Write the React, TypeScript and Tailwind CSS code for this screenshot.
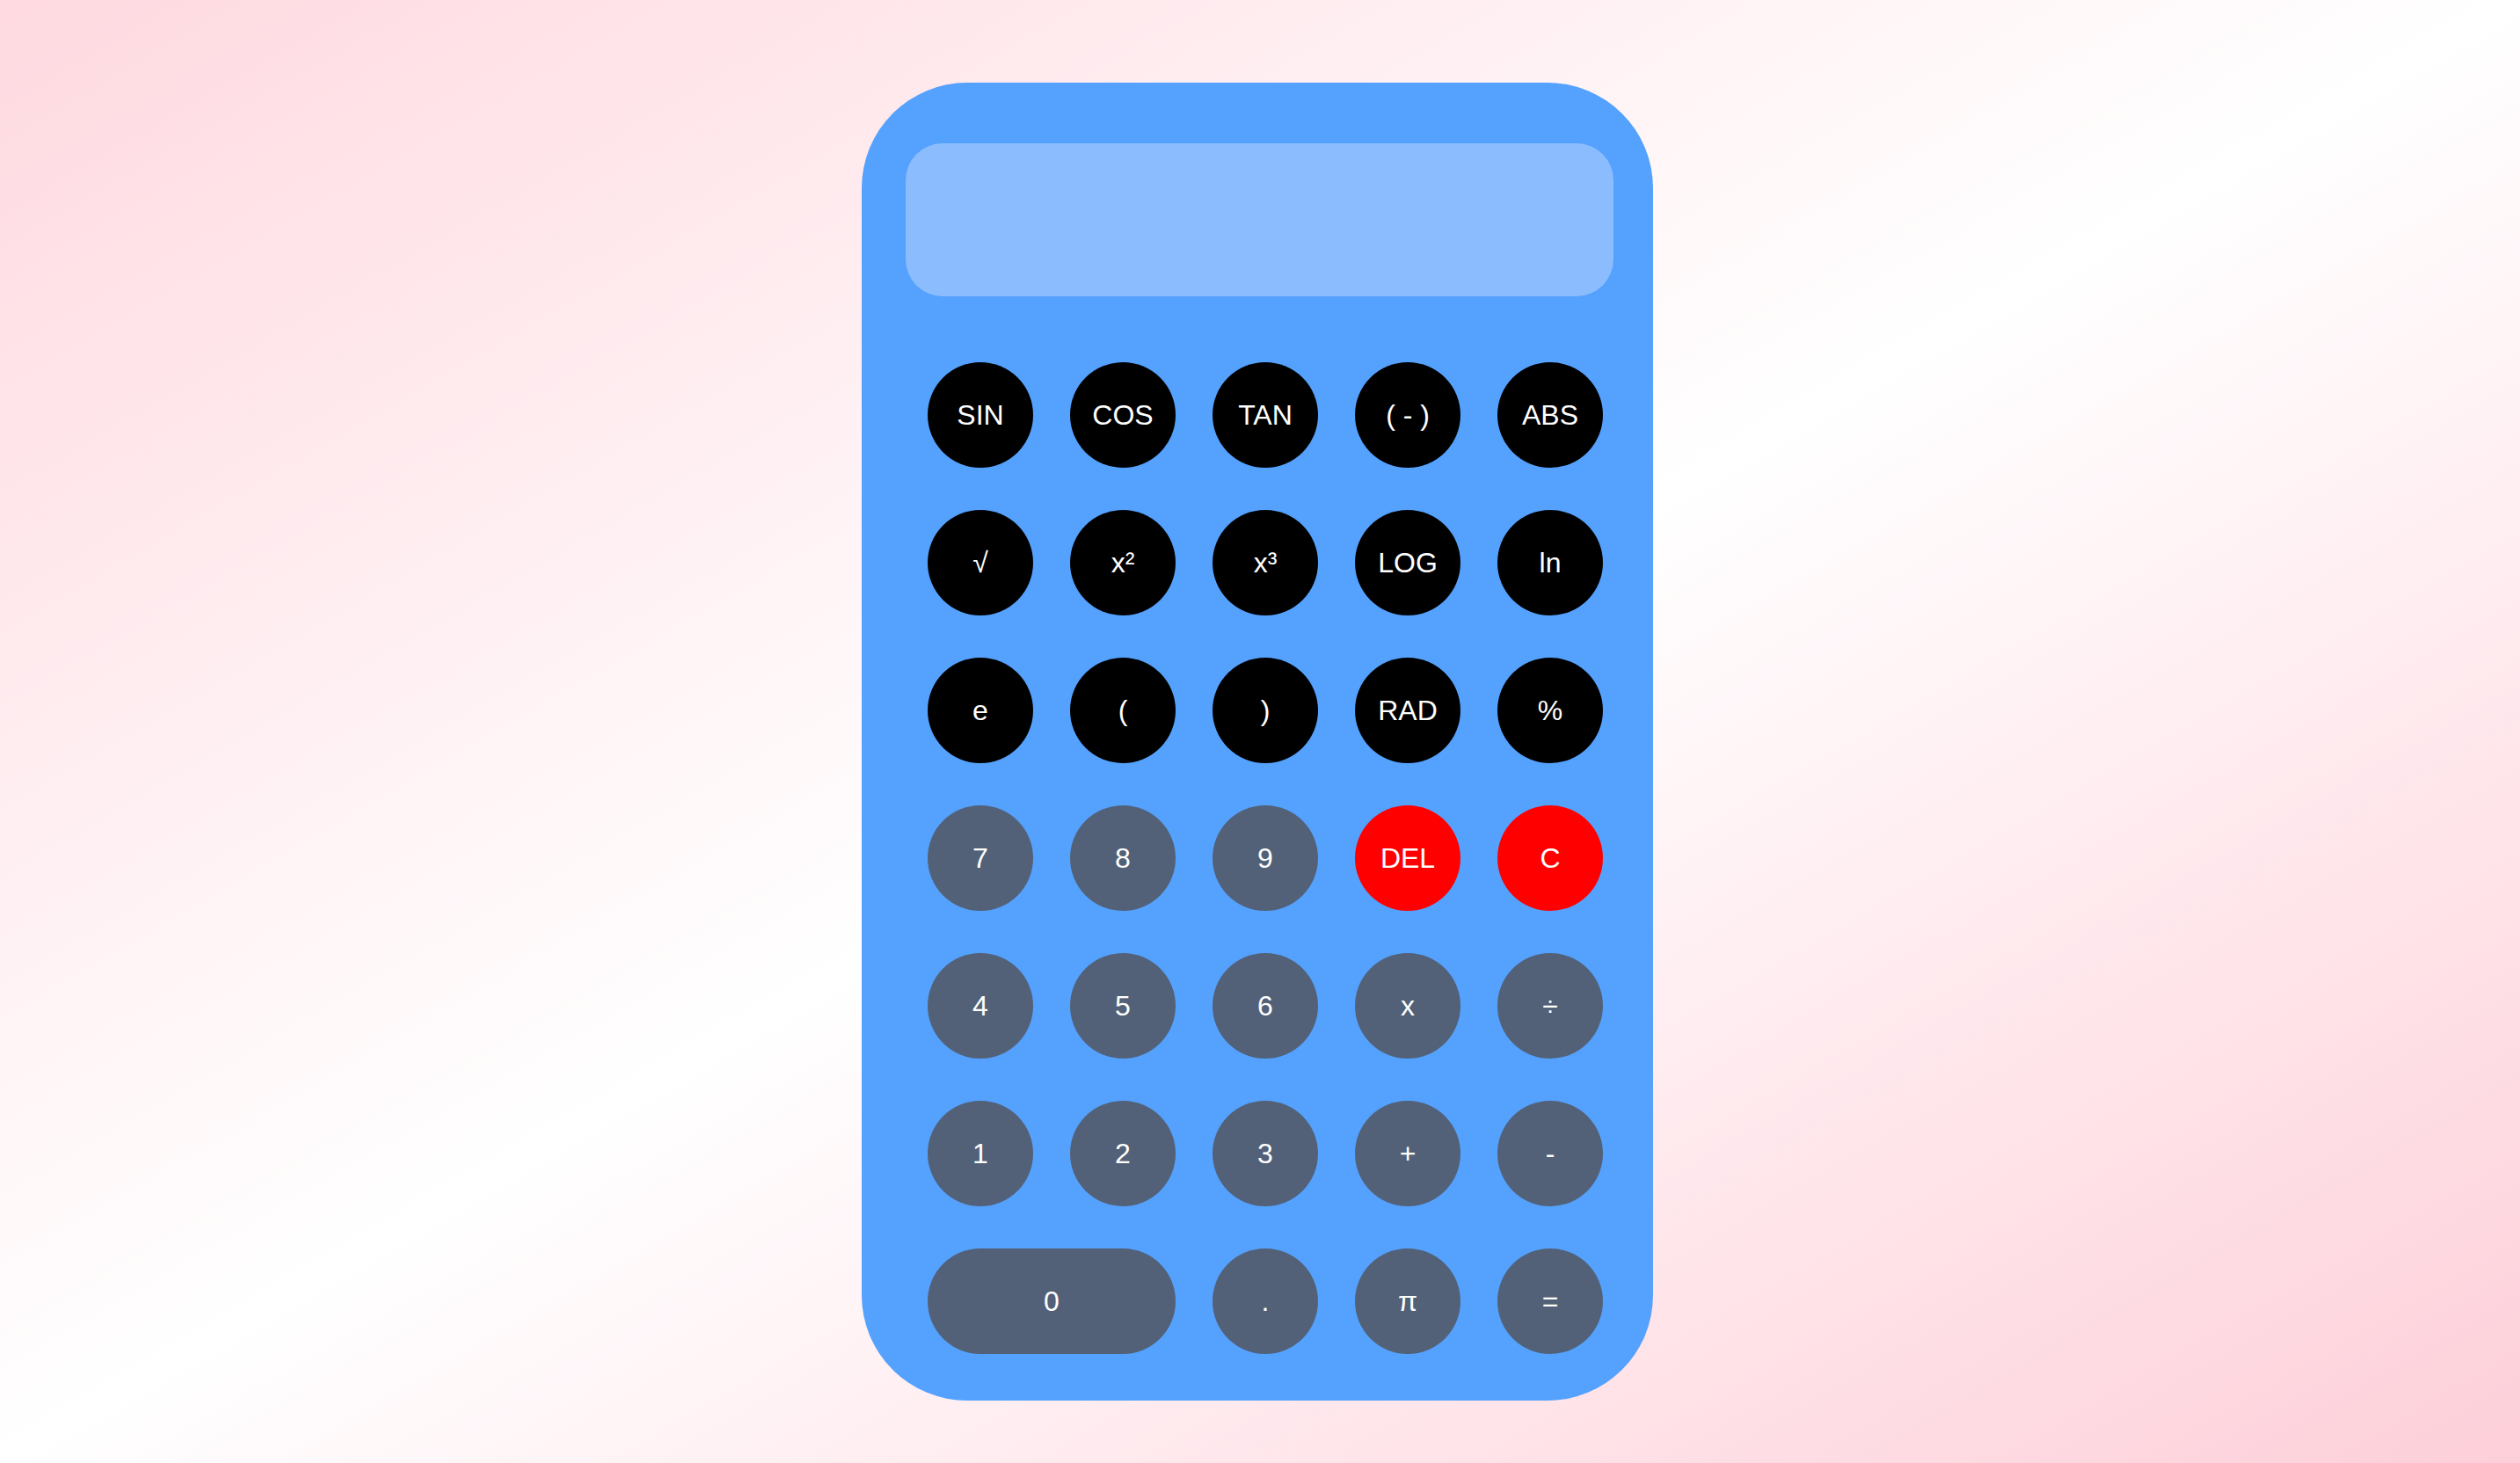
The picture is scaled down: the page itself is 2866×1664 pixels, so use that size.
import React from "react";

type Key = {
  label: string;
  kind: "fn" | "num" | "danger";
  wide?: boolean;
};

const keys: Key[] = [
  { label: "SIN", kind: "fn" },
  { label: "COS", kind: "fn" },
  { label: "TAN", kind: "fn" },
  { label: "( - )", kind: "fn" },
  { label: "ABS", kind: "fn" },

  { label: "√", kind: "fn" },
  { label: "x²", kind: "fn" },
  { label: "x³", kind: "fn" },
  { label: "LOG", kind: "fn" },
  { label: "ln", kind: "fn" },

  { label: "e", kind: "fn" },
  { label: "(", kind: "fn" },
  { label: ")", kind: "fn" },
  { label: "RAD", kind: "fn" },
  { label: "%", kind: "fn" },

  { label: "7", kind: "num" },
  { label: "8", kind: "num" },
  { label: "9", kind: "num" },
  { label: "DEL", kind: "danger" },
  { label: "C", kind: "danger" },

  { label: "4", kind: "num" },
  { label: "5", kind: "num" },
  { label: "6", kind: "num" },
  { label: "x", kind: "num" },
  { label: "÷", kind: "num" },

  { label: "1", kind: "num" },
  { label: "2", kind: "num" },
  { label: "3", kind: "num" },
  { label: "+", kind: "num" },
  { label: "-", kind: "num" },

  { label: "0", kind: "num", wide: true },
  { label: ".", kind: "num" },
  { label: "π", kind: "num" },
  { label: "=", kind: "num" },
];

const kindClass = {
  fn: "bg-black",
  num: "bg-[#526177]",
  danger: "bg-[#ff0000]",
};

export default function App() {
  return (
    <div
      className="min-h-screen w-full flex justify-center bg-linear-to-br from-[#fed9e0] via-white to-[#fdcfd9]"
      style={{ fontFamily: '"Liberation Sans", Arial, sans-serif' }}
    >
      {/* calculator body */}
      <div className="mt-[94px] mb-[71px] mr-[6px] w-[900px] rounded-[120px] bg-[#54a1fe] pt-[69px] pb-[53px] pl-[50px] pr-[45px]">
        {/* display */}
        <div className="h-[174px] w-full rounded-[42px] bg-[#8bbdfe]" />

        {/* keypad */}
        <div className="mt-[75px] pl-[25px] grid grid-cols-[repeat(5,120px)] gap-x-[42px] gap-y-[48px]">
          {keys.map((k) => (
            <button
              key={k.label}
              className={`${kindClass[k.kind]} ${
                k.wide ? "col-span-2 w-[282px]" : "w-[120px]"
              } h-[120px] rounded-full flex items-center justify-center text-white text-[32px] leading-none cursor-pointer`}
            >
              {k.label}
            </button>
          ))}
        </div>
      </div>
    </div>
  );
}
